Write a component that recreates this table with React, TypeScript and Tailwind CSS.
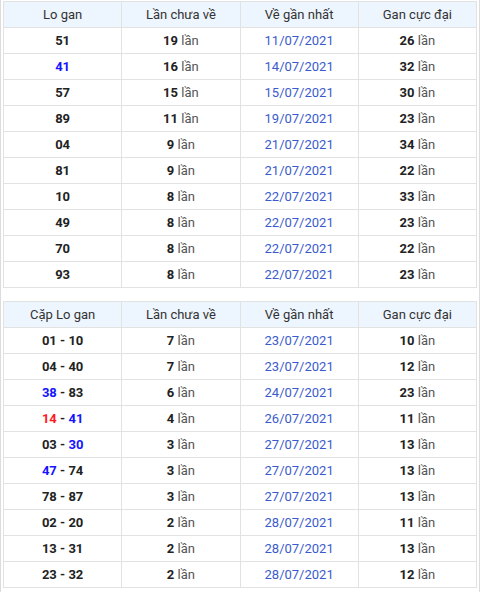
import React from "react";

type Row = { lo: React.ReactNode; chua: number; ve: string; cuc: number };

const B = ({ c }: { c: string }) => <span className="text-[#1414ff]">{c}</span>;
const R = ({ c }: { c: string }) => <span className="text-[#ff1a1a]">{c}</span>;

const loGan: Row[] = [
  { lo: "51", chua: 19, ve: "11/07/2021", cuc: 26 },
  { lo: <B c="41" />, chua: 16, ve: "14/07/2021", cuc: 32 },
  { lo: "57", chua: 15, ve: "15/07/2021", cuc: 30 },
  { lo: "89", chua: 11, ve: "19/07/2021", cuc: 23 },
  { lo: "04", chua: 9, ve: "21/07/2021", cuc: 34 },
  { lo: "81", chua: 9, ve: "21/07/2021", cuc: 22 },
  { lo: "10", chua: 8, ve: "22/07/2021", cuc: 33 },
  { lo: "49", chua: 8, ve: "22/07/2021", cuc: 23 },
  { lo: "70", chua: 8, ve: "22/07/2021", cuc: 22 },
  { lo: "93", chua: 8, ve: "22/07/2021", cuc: 23 },
];

const capLoGan: Row[] = [
  { lo: "01 - 10", chua: 7, ve: "23/07/2021", cuc: 10 },
  { lo: "04 - 40", chua: 7, ve: "23/07/2021", cuc: 12 },
  { lo: <><B c="38" /> - 83</>, chua: 6, ve: "24/07/2021", cuc: 23 },
  { lo: <><R c="14" /> - <B c="41" /></>, chua: 4, ve: "26/07/2021", cuc: 11 },
  { lo: <>03 - <B c="30" /></>, chua: 3, ve: "27/07/2021", cuc: 13 },
  { lo: <><B c="47" /> - 74</>, chua: 3, ve: "27/07/2021", cuc: 13 },
  { lo: "78 - 87", chua: 3, ve: "27/07/2021", cuc: 13 },
  { lo: "02 - 20", chua: 2, ve: "28/07/2021", cuc: 11 },
  { lo: "13 - 31", chua: 2, ve: "28/07/2021", cuc: 13 },
  { lo: "23 - 32", chua: 2, ve: "28/07/2021", cuc: 12 },
];

const Lan = ({ n }: { n: number }) => (
  <>
    <span className="font-bold text-[#222]">{n}</span> <span className="text-[#555]">lần</span>
  </>
);

const GanTable = ({ title, rows, className }: { title: string; rows: Row[]; className?: string }) => (
  <table className={`w-full table-fixed border-collapse text-center text-[13px] ${className ?? ""}`}>
    <thead>
      <tr className="h-[26px] bg-[#edf5fe] text-[#333]">
        <th className="border border-[#e2e2e2] font-normal">{title}</th>
        <th className="border border-[#e2e2e2] font-normal">Lần chưa về</th>
        <th className="border border-[#e2e2e2] font-normal">Về gần nhất</th>
        <th className="border border-[#e2e2e2] font-normal">Gan cực đại</th>
      </tr>
    </thead>
    <tbody>
      {rows.map((r, i) => (
        <tr key={i} className="h-[26px]">
          <td className="border border-[#e2e2e2] font-bold text-[#222]">{r.lo}</td>
          <td className="border border-[#e2e2e2]"><Lan n={r.chua} /></td>
          <td className="border border-[#e2e2e2] text-[#3a5bcc]">{r.ve}</td>
          <td className="border border-[#e2e2e2]"><Lan n={r.cuc} /></td>
        </tr>
      ))}
    </tbody>
  </table>
);

export default function App() {
  return (
    <div className="w-[480px] h-[592px] bg-white border-x border-[#dcdcdc] px-[2px] pt-[1px] font-['Roboto',sans-serif]">
      <GanTable title="Lo gan" rows={loGan} />
      <GanTable title="Cặp Lo gan" rows={capLoGan} className="mt-[13px]" />
    </div>
  );
}
